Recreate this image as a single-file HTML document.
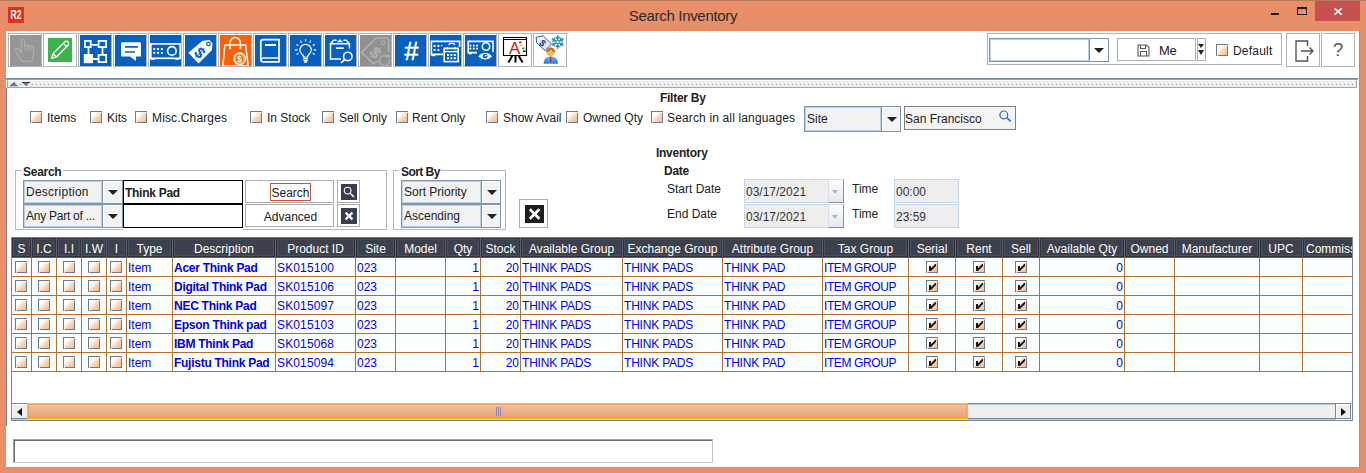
<!DOCTYPE html>
<html><head><meta charset="utf-8"><title>Search Inventory</title>
<style>
*{box-sizing:border-box;margin:0;padding:0}
html,body{width:1366px;height:473px;overflow:hidden;background:#e88e68;font-family:"Liberation Sans",sans-serif;font-size:12px;color:#222}
.a{position:absolute}
#win{position:absolute;left:0;top:0;width:1366px;height:473px;background:#e88e68}
#content{position:absolute;left:6px;top:31px;width:1353px;height:436px;background:#fff}
#redge{position:absolute;left:1359px;top:31px;width:1px;height:436px;background:#d77f55}
.title{position:absolute;left:0;width:1366px;top:7px;text-align:center;font-size:15px;color:#2b2b2b;letter-spacing:-0.32px}
.tb{position:absolute;top:33px;width:34px;height:34px;border:1px solid #b4b4b4;background:#fff;padding:1px}
.tb.blue{background:#fff}
.cb{position:absolute;width:12px;height:12px;border-top:1px solid #6b7c8c;border-left:1px solid #6b7c8c;background:linear-gradient(135deg,#fff 0%,#fff 25%,#fbd0ac 60%,#f9b27a 100%)}
.cb:after{content:"";position:absolute;left:1px;top:1px;right:0;bottom:0;border-right:1px solid #6b7c8c;border-bottom:1px solid #6b7c8c}
.lbl{position:absolute;white-space:nowrap;line-height:14px;height:14px}
.b{font-weight:bold;letter-spacing:-0.27px}
.combo{position:absolute;border:1px solid #7f96ad;background:#f2f2f2}
.combo .t{position:absolute;left:0;top:0;bottom:0;border:1px solid #b8cfe5;background:#f2f2f2;padding-left:1px;white-space:nowrap;overflow:hidden}
.combo .ar{position:absolute;right:0;top:0;bottom:0;width:19px;border-left:1px solid #7f96ad;background:#f3f3f3;box-shadow:inset 1px 1px 0 #fff}
.tri{position:absolute;width:0;height:0;border-left:5px solid transparent;border-right:5px solid transparent;border-top:5px solid #222}
.btn{position:absolute;border:1px solid #adadad;background:#fff;text-align:center}
.th{position:absolute;top:1px;height:19px;background:#3c414d;border:1px solid #2e323c;color:#fff;text-align:center;line-height:18px;padding-top:1px;white-space:nowrap;overflow:hidden;box-shadow:inset 0 0 0 1px #4b505d}
.td{position:absolute;height:19px;background:#fbfeff;border-right:1px solid #b5702f;border-bottom:1px solid #b5702f;color:#0000f0;line-height:20px;white-space:nowrap;overflow:hidden;padding-left:1px}
.td.r{text-align:right;padding-right:1px;padding-left:0}
.ck{position:absolute;width:11px;height:11px;border:1px solid #7a8a99;background:linear-gradient(135deg,#fff 20%,#f9c8a0 100%)}
</style></head><body>
<div id="win">

<div class="a" style="left:0;top:0;width:1366px;height:1px;background:#b9775b"></div>
<div class="a" style="left:8px;top:7px;width:16px;height:16px;background:#e0301e;overflow:hidden"><div style="width:16px;color:#fff;font-size:12px;font-weight:bold;line-height:16px;text-align:center;transform:scaleX(.72)">R2</div></div>
<div class="title">Search Inventory</div>
<div class="a" style="left:1271px;top:13px;width:8px;height:2px;background:#1a1a1a"></div>
<div class="a" style="left:1297px;top:7px;width:10px;height:8px;border:1px solid #1a1a1a;border-top-width:2px"></div>
<div class="a" style="left:1315px;top:1px;width:45px;height:20px;background:#c75050"></div>
<svg class="a" style="left:1333px;top:7px" width="10" height="9" viewBox="0 0 10 9"><path d="M1.500 1.300 L8.700 7.700 M8.700 1.300 L1.500 7.700" stroke="#fff" stroke-width="1.700" fill="none"/></svg>
<div class="a" style="left:6px;top:30px;width:1354px;height:1px;background:#dd8a62"></div>
<div id="content"></div><div id="redge"></div>
<div class="tb" style="left:8px"><svg class="a" style="left:1px;top:1px" width="31" height="31" viewBox="0 0 31 31"><rect width="31" height="31" fill="#969696"/><path d="M11.300 17.600 V5.800 a1.700 1.700 0 0 1 3.400 0 V11.200 q0.200 -1.200 1.500 -1.200 q1.400 0 1.400 1.600 q0.200 -1 1.500 -1 q1.400 0 1.400 1.700 q0.200 -0.800 1.500 -0.800 q1.500 0 1.500 1.800 V21 q0 1.500 -1.800 5.400 H12 L5.700 16.500 q-0.900 -1.800 0.500 -2.700 q1.300 -0.700 2.400 0.600 Z M14.700 11.200 V15.500 M17.600 11.800 V15.500 M20.500 12.400 V15.800" stroke="#adadad" stroke-width="1.300" fill="none" stroke-linejoin="round"/></svg></div>
<div class="tb" style="left:43px"><svg class="a" style="left:4px;top:4px" width="24" height="24" viewBox="0 0 24 24"><rect width="24" height="24" fill="#3cb44b"/><path d="M3.6 20.4 L5 15.6 L16.6 4 a2.2 2.2 0 0 1 3.3 3.3 L8.4 19 Z M5 15.6 L8.4 19 M15.3 5.3 L18.7 8.7" stroke="#fff" stroke-width="1.3" fill="none" stroke-linejoin="round"/><path d="M3.6 20.4 L4.3 18 L6 19.7 Z" fill="#fff"/></svg></div>
<div class="tb" style="left:78px"><svg class="a" style="left:1px;top:1px" width="31" height="31" viewBox="0 0 31 31"><rect width="31" height="31" fill="#0560c0"/><g stroke="#fff" fill="none" stroke-width="1.8"><rect x="4.9" y="5.9" width="5.8" height="6.2"/><rect x="18.6" y="5.9" width="7.5" height="6.2"/><rect x="18.6" y="19.9" width="7.5" height="7.2"/><path d="M11.500 9.800 H17.800 M8.500 13 V19.200 M22.500 13 V19.200 M13 24 H17.800"/></g><rect x="3.800" y="19" width="9.200" height="9.200" fill="#fff"/></svg></div>
<div class="tb" style="left:113px"><svg class="a" style="left:1px;top:1px" width="31" height="31" viewBox="0 0 31 31"><rect width="31" height="31" fill="#0560c0"/><path d="M7.3 7.3 H24.8 a1.2 1.2 0 0 1 1.2 1.2 V20.4 a1.2 1.2 0 0 1 -1.2 1.2 H21 V26 L15 21.6 H7.3 a1.2 1.2 0 0 1 -1.2 -1.2 V8.5 a1.2 1.2 0 0 1 1.2 -1.2 Z" fill="#fff"/><path d="M10 11.9 H23 M10 17 H20" stroke="#0560c0" stroke-width="1.7"/></svg></div>
<div class="tb" style="left:148px"><svg class="a" style="left:1px;top:1px" width="31" height="31" viewBox="0 0 31 31"><rect width="31" height="31" fill="#0560c0"/><rect x="0.8" y="8.9" width="29.4" height="14.4" stroke="#fff" fill="none" stroke-width="1.7"/><rect x="0.8" y="23.5" width="4.2" height="1.3" fill="#fff"/><rect x="25" y="23.5" width="4.2" height="1.3" fill="#fff"/><circle cx="21.9" cy="15.9" r="4.3" stroke="#fff" fill="none" stroke-width="1.6"/><g fill="#fff"><rect x="3.3" y="13.1" width="1.9" height="1.9"/><rect x="7.1" y="13.1" width="1.9" height="1.9"/><rect x="10.9" y="13.1" width="1.9" height="1.9"/><rect x="3.3" y="16.9" width="1.9" height="1.9"/><rect x="7.1" y="16.9" width="1.9" height="1.9"/><rect x="10.9" y="16.9" width="1.9" height="1.9"/></g></svg></div>
<div class="tb" style="left:183px"><svg class="a" style="left:1px;top:1px" width="31" height="31" viewBox="0 0 31 31"><rect width="31" height="31" fill="#0560c0"/><path d="M3.3 17.8 L17.6 5.8 L24.6 5 L27.4 8.6 L27 15 L13.6 28.4 Z" fill="#fff"/><circle cx="23.4" cy="8.9" r="1.7" fill="none" stroke="#0560c0" stroke-width="1.3"/><text transform="translate(14.800 17.700) rotate(45)" x="0" y="5.300" text-anchor="middle" font-family="Liberation Sans, sans-serif" font-weight="bold" font-size="15.500" fill="#0560c0">$</text></svg></div>
<div class="tb" style="left:218px"><svg class="a" style="left:1px;top:1px" width="31" height="31" viewBox="0 0 31 31"><rect width="31" height="31" fill="#ff5f05"/><path d="M4.900 9.900 H25.600 L28.200 31 H2.800 Z" stroke="#fff" fill="none" stroke-width="1.500"/><path d="M10 13 V7.800 a5.200 5.200 0 0 1 10.400 0 V13" stroke="#fff" fill="none" stroke-width="1.500"/><circle cx="10" cy="13.200" r="1.100" fill="#fff"/><circle cx="20.400" cy="13.200" r="1.100" fill="#fff"/><circle cx="19.700" cy="23.700" r="5.700" fill="#ff5f05" stroke="#fff" stroke-width="1.500"/><circle cx="19.700" cy="23.700" r="4.100" fill="none" stroke="#fff" stroke-width="0.500"/><text x="19.700" y="26.800" text-anchor="middle" font-family="Liberation Sans, sans-serif" font-weight="bold" font-size="8.500" fill="#fff">$</text></svg></div>
<div class="tb" style="left:253px"><svg class="a" style="left:1px;top:1px" width="31" height="31" viewBox="0 0 31 31"><rect width="31" height="31" fill="#0560c0"/><path d="M24 4.7 H8 a2.2 2.2 0 0 0 -2.2 2.2 V24.6 a2.2 2.2 0 0 0 2.2 2.2 H24 Z" stroke="#fff" fill="none" stroke-width="1.7"/><path d="M24 23 H8.2 a1.9 1.9 0 0 0 -2 1.9" stroke="#fff" fill="none" stroke-width="1.5"/><rect x="10" y="9" width="11" height="2" fill="#fff"/></svg></div>
<div class="tb" style="left:288px"><svg class="a" style="left:1px;top:1px" width="31" height="31" viewBox="0 0 31 31"><rect width="31" height="31" fill="#0560c0"/><path d="M13.5 22 c0 -2.6 -3.6 -3.6 -3.6 -7 a5.7 5.7 0 0 1 11.4 0 c0 3.4 -3.6 4.4 -3.6 7 Z" stroke="#fff" fill="none" stroke-width="1.2"/><path d="M13.300 23.500 H17.900 M13.300 25.300 H17.900 M14 27 H17.200" stroke="#fff" stroke-width="1.300"/><g stroke="#fff" stroke-width="1.1"><path d="M15.6 4.2 V6.4 M10.4 5.6 L11.5 7.7 M20.8 5.6 L19.7 7.7 M6.4 9.4 L8.5 10.6 M24.8 9.4 L22.7 10.6 M5 14.9 H7.6 M23.6 14.9 H26.2 M6.4 19.5 L8.5 18.3 M24.8 19.5 L22.7 18.3"/></g></svg></div>
<div class="tb" style="left:323px"><svg class="a" style="left:1px;top:1px" width="31" height="31" viewBox="0 0 31 31"><rect width="31" height="31" fill="#0560c0"/><path d="M24.400 13.600 V8.800 H5.500 V24 H16" stroke="#fff" fill="none" stroke-width="1.500"/><path d="M5.500 8.800 L8.700 5.300 H11.600 M18.400 5.300 H21.300 L24.400 8.800" stroke="#fff" fill="none" stroke-width="1.400"/><path d="M11.600 7.300 L14.900 3.900 L18.200 7.300 Z" fill="#dfeaf8"/><rect x="10.900" y="12.300" width="7.900" height="1.700" fill="#fff"/><circle cx="22.800" cy="21.400" r="4.200" stroke="#fff" fill="none" stroke-width="1.600"/><path d="M19.600 24.600 L16 27.900" stroke="#fff" stroke-width="1.900"/></svg></div>
<div class="tb" style="left:358px"><svg class="a" style="left:1px;top:1px" width="31" height="31" viewBox="0 0 31 31"><rect width="31" height="31" fill="#909090"/><path d="M17.800 25.800 L13.400 28.900 L1.600 17.400 L16.200 3 H27.300 a1.400 1.400 0 0 1 1.400 1.400 V17" stroke="#b0b0b0" fill="none" stroke-width="1.700" stroke-linejoin="round"/><circle cx="23" cy="7.700" r="1.900" stroke="#b0b0b0" fill="none" stroke-width="1.100"/><text transform="translate(15.500 17.400) rotate(45)" x="0" y="5.200" text-anchor="middle" font-family="Liberation Sans, sans-serif" font-size="15" fill="#b0b0b0" stroke="#b0b0b0" stroke-width=".7">$</text><path d="M27.600 21.800 a5 5 0 1 0 1.800 3.200" stroke="#b0b0b0" fill="none" stroke-width="1.500"/><path d="M26.800 18.600 L30.800 21.400 L27 23.300 Z" fill="#b0b0b0"/></svg></div>
<div class="tb" style="left:393px"><svg class="a" style="left:1px;top:1px" width="31" height="31" viewBox="0 0 31 31"><rect width="31" height="31" fill="#0560c0"/><text x="16" y="24.600" text-anchor="middle" font-family="Liberation Sans, sans-serif" font-style="italic" font-size="25.500" fill="#fff" stroke="#fff" stroke-width="0.500">#</text></svg></div>
<div class="tb" style="left:428px"><svg class="a" style="left:1px;top:1px" width="31" height="31" viewBox="0 0 31 31"><rect width="31" height="31" fill="#0560c0"/><path d="M13 19.4 H1.4 V6.4 H29.6 V12" stroke="#fff" fill="none" stroke-width="1.6"/><rect x="1.4" y="20" width="4" height="1.2" fill="#fff"/><g fill="#fff"><rect x="3.6" y="10" width="1.9" height="1.9"/><rect x="7.4" y="10" width="1.9" height="1.9"/><rect x="3.6" y="14" width="1.9" height="1.9"/><rect x="7.4" y="14" width="1.9" height="1.9"/><rect x="11" y="10" width="1.4" height="1"/></g><path d="M18.5 10 a4 4 0 0 1 6.6 0" stroke="#fff" fill="none" stroke-width="1.3"/><rect x="14.2" y="13.4" width="14" height="13.2" fill="#0560c0" stroke="#fff" stroke-width="1.6"/><path d="M14.2 16.6 H28.2" stroke="#fff" stroke-width="1.4"/><circle cx="17.2" cy="13.2" r="1.3" fill="#fff"/><circle cx="25.2" cy="13.2" r="1.3" fill="#fff"/><g fill="#fff"><rect x="17" y="19" width="2" height="2"/><rect x="20.4" y="19" width="2" height="2"/><rect x="23.8" y="19" width="2" height="2"/><rect x="17" y="22.2" width="2" height="2"/><rect x="20.4" y="22.2" width="2" height="2"/><rect x="23.8" y="22.2" width="2" height="2"/></g></svg></div>
<div class="tb" style="left:463px"><svg class="a" style="left:1px;top:1px" width="31" height="31" viewBox="0 0 31 31"><rect width="31" height="31" fill="#0560c0"/><path d="M12 17.6 H3.2 V6.4 H28 V17" stroke="#fff" fill="none" stroke-width="1.6"/><rect x="3.4" y="18.2" width="3.6" height="1.1" fill="#fff"/><g fill="#fff"><rect x="4.5" y="9.7" width="1.8" height="1.8"/><rect x="7.9" y="9.7" width="1.8" height="1.8"/><rect x="11.2" y="9.7" width="1.8" height="1.8"/><rect x="4.5" y="12.7" width="1.8" height="1.8"/><rect x="7.9" y="12.7" width="1.8" height="1.8"/><rect x="11.2" y="12.7" width="1.8" height="1.8"/></g><circle cx="21" cy="11.5" r="3.7" stroke="#fff" fill="none" stroke-width="1.5"/><path d="M12.6 21.2 Q20.2 13.4 27.8 21.2 Q20.2 29 12.6 21.2 Z" fill="#fff" stroke="#0560c0" stroke-width="1"/><circle cx="20.2" cy="21.2" r="2.4" fill="#0560c0"/><circle cx="20.8" cy="20.6" r="0.9" fill="#fff"/></svg></div>
<div class="tb" style="left:498px"><svg class="a" style="left:1px;top:1px" width="31" height="31" viewBox="0 0 31 31"><rect x="3.500" y="2.500" width="23" height="18" fill="#fff" stroke="#000" stroke-width="1.100"/><path d="M3.500 4.500 H26.500" stroke="#000" stroke-width="1"/><path d="M12.2 21 L8.4 27.6 M15.5 21 V27.6 M18.8 21 L22.6 27.6" stroke="#000" stroke-width="2"/><text x="14.6" y="19" text-anchor="middle" font-family="Liberation Sans, sans-serif" font-size="17" fill="#d01818">A</text><rect x="19" y="6.6" width="2.6" height="1.6" fill="#e01010"/><rect x="20" y="9.6" width="2.6" height="1.6" fill="#f0d000"/><rect x="22" y="12.5" width="2.6" height="1.6" fill="#10c010"/><rect x="23" y="15.4" width="2.6" height="1.6" fill="#1010f0"/></svg></div>
<div class="tb" style="left:533px"><svg class="a" style="left:1px;top:1px" width="31" height="31" viewBox="0 0 31 31"><defs><linearGradient id="tg" x1="0" y1="0" x2="1" y2="1"><stop offset="0" stop-color="#fff"/><stop offset="1" stop-color="#cfe2fa"/></linearGradient><radialGradient id="bd" cx=".5" cy=".2" r=".9"><stop offset="0" stop-color="#6ab4f4"/><stop offset="1" stop-color="#1c78d8"/></radialGradient></defs><path d="M1.2 2.2 L8.3 0.9 L16.4 9 L10 15.7 L1.6 7.7 Z" fill="url(#tg)" stroke="#2262b4" stroke-width="1"/><text transform="translate(7.600 8) rotate(45)" x="0" y="3.300" text-anchor="middle" font-family="Liberation Sans, sans-serif" font-weight="bold" font-size="9.500" fill="#3a2a80">$</text><g stroke="#2590b4" stroke-width="1.400" fill="none"><g transform="rotate(0 22.700 7)"><path d="M22.700 7 V0.200 M20.700 1.900 L22.700 3.700 L24.700 1.900"/></g><g transform="rotate(60 22.700 7)"><path d="M22.700 7 V0.200 M20.700 1.900 L22.700 3.700 L24.700 1.900"/></g><g transform="rotate(120 22.700 7)"><path d="M22.700 7 V0.200 M20.700 1.900 L22.700 3.700 L24.700 1.900"/></g><g transform="rotate(180 22.700 7)"><path d="M22.700 7 V0.200 M20.700 1.900 L22.700 3.700 L24.700 1.900"/></g><g transform="rotate(240 22.700 7)"><path d="M22.700 7 V0.200 M20.700 1.900 L22.700 3.700 L24.700 1.900"/></g><g transform="rotate(300 22.700 7)"><path d="M22.700 7 V0.200 M20.700 1.900 L22.700 3.700 L24.700 1.900"/></g></g><circle cx="22.700" cy="7" r="1.700" fill="#fff" stroke="#2590b4" stroke-width="1"/><path d="M8.6 28.8 c0 -5 3.200 -7.400 7.200 -7.400 c4 0 7.200 2.400 7.200 7.400 Z" fill="url(#bd)"/><path d="M15.200 21.600 L16.200 21.600 L16.900 26.500 L15.700 27.800 L14.500 26.500 Z" fill="#d03030"/><circle cx="15.600" cy="16.800" r="4.400" fill="#f8b866"/><path d="M10.900 17.400 a4.700 4.900 0 0 1 9.400 0 c-1.600 -0.500 -3.200 -1.500 -4.300 -3 c-1.300 1.700 -3.200 2.600 -5.100 3 Z" fill="#b87818"/></svg></div>
<div class="a" style="left:987px;top:33px;width:295px;height:32px;border:1px solid #b4b4b4"></div>
<div class="combo" style="left:989px;top:38px;width:120px;height:24px"><div class="t" style="right:19px;background:#fff"></div><div class="ar" style="background:#fff"><div class="tri" style="left:4px;top:9px"></div></div></div>
<div class="btn" style="left:1117px;top:38px;width:79px;height:23px"></div>
<svg class="a" style="left:1137px;top:44px" width="13" height="13" viewBox="0 0 13 13"><path d="M1 1 H9.500 L12 3.500 V12 H1 Z" fill="none" stroke="#5a5a5a" stroke-width="1.1"/><path d="M3.500 1 V4.500 H8.500 V1 M3.500 12 V7.500 H9.500 V12" fill="none" stroke="#5a5a5a" stroke-width="1.1"/></svg>
<div class="lbl" style="left:1159px;top:43px;font-size:13px;letter-spacing:-.4px;line-height:16px;height:16px">Me</div>
<div class="btn" style="left:1197px;top:38px;width:9px;height:23px"></div>
<div class="tri" style="left:1198px;top:44px;border-left-width:3.5px;border-right-width:3.5px;border-top-width:4px"></div><div class="tri" style="left:1198px;top:50px;border-left-width:3.5px;border-right-width:3.5px;border-top-width:5px"></div>
<div class="cb" style="left:1216px;top:44px"></div><div class="lbl" style="left:1233px;top:44px;letter-spacing:.2px">Default</div>
<div class="tb" style="left:1286px"><svg class="a" style="left:8px;top:6px" width="20" height="22" viewBox="0 0 20 22"><path d="M12.500 6 V1 H1 V21 H12.500 V16" fill="none" stroke="#555" stroke-width="1.400"/><path d="M6 11 H18 M14.500 7.500 L18 11 L14.500 14.500" fill="none" stroke="#555" stroke-width="1.400"/></svg></div>
<div class="tb" style="left:1321px"><div style="position:absolute;left:0;top:5px;width:32px;text-align:center;font-size:19px;line-height:22px;color:#5a5a5a">?</div></div>
<div class="a" style="left:6px;top:78px;width:1352px;height:2px;background:linear-gradient(#6f8aa6 50%,#9aa3ad 50%)"></div>
<div class="a" style="left:7px;top:80px;width:1350px;height:8px;background:#eee;border:1px solid #a6a6a6;border-top-color:#fff;background-image:radial-gradient(circle at 0.5px 0.5px,#7f8c9a 0.6px,transparent 0.9px);background-size:4px 8px;background-position:24px 3px;background-repeat:repeat-x"></div>
<div class="a" style="left:8px;top:81px;width:24px;height:6px;background:#eee"></div>
<svg class="a" style="left:10px;top:82px" width="22" height="5" viewBox="0 0 22 5"><path d="M0.300 4.300 L4.300 0.300 L8.300 4.300 Z" fill="#5a7fc8"/><path d="M0.300 4.300 L4.300 0.300" stroke="#222" stroke-width="0.900"/><path d="M12 0.300 L20 0.300 L16 4.300 Z" fill="#5a7fc8"/><path d="M12 0.400 H20" stroke="#222" stroke-width="0.900"/><rect x="10" y="2" width="1" height="1" fill="#7f8c9a"/></svg>
<div class="a" style="left:6px;top:88px;width:1px;height:338px;background:#7a8a99"></div>
<div class="cb" style="left:30px;top:111px"></div><div class="lbl" style="left:47px;top:111px">Items</div>
<div class="cb" style="left:90px;top:111px"></div><div class="lbl" style="left:107px;top:111px">Kits</div>
<div class="cb" style="left:135px;top:111px"></div><div class="lbl" style="left:152px;top:111px"><span style="letter-spacing:.15px">Misc.Charges</span></div>
<div class="cb" style="left:250px;top:111px"></div><div class="lbl" style="left:267px;top:111px">In Stock</div>
<div class="cb" style="left:322px;top:111px"></div><div class="lbl" style="left:339px;top:111px">Sell Only</div>
<div class="cb" style="left:396px;top:111px"></div><div class="lbl" style="left:412px;top:111px">Rent Only</div>
<div class="cb" style="left:486px;top:111px"></div><div class="lbl" style="left:503px;top:111px">Show Avail</div>
<div class="cb" style="left:566px;top:111px"></div><div class="lbl" style="left:583px;top:111px">Owned Qty</div>
<div class="cb" style="left:651px;top:111px"></div><div class="lbl" style="left:667px;top:111px"><span style="letter-spacing:.15px">Search in all languages</span></div>
<div class="lbl b" style="left:660px;top:91px">Filter By</div>
<div class="combo" style="left:804px;top:106px;width:97px;height:26px"><div class="t" style="right:19px;line-height:22px">Site</div><div class="ar" style="width:19px"><div class="tri" style="left:5px;top:10px"></div></div></div>
<div class="a" style="left:904px;top:106px;width:112px;height:24px;border:1px solid #808080;background:#f4f4f4"></div>
<div class="lbl" style="left:905px;top:112px">San Francisco</div>
<svg class="a" style="left:998px;top:109px" width="15" height="15" viewBox="0 0 15 15"><circle cx="5.800" cy="5.900" r="3.900" fill="none" stroke="#2470c8" stroke-width="1.200"/><path d="M8.600 8.700 L12.800 12.400" stroke="#2470c8" stroke-width="1.600"/></svg>
<div class="a" style="left:15px;top:170px;width:372px;height:60px;border:1px solid #b8b8b8"></div>
<div class="lbl b" style="left:21px;top:165px;background:#fff;padding:0 2px;width:42px">Search</div>
<div class="combo" style="left:23px;top:180px;width:100px;height:24px"><div class="t" style="right:20px;line-height:20px"><span style="letter-spacing:.25px">Description</span></div><div class="ar" style="width:20px"><div class="tri" style="left:5px;top:9px"></div></div></div>
<div class="combo" style="left:23px;top:204px;width:100px;height:24px"><div class="t" style="right:20px;line-height:20px"><span style="letter-spacing:-.25px">Any Part of ...</span></div><div class="ar" style="width:20px"><div class="tri" style="left:5px;top:9px"></div></div></div>
<div class="a" style="left:123px;top:180px;width:120px;height:24px;border:1px solid #000;background:#fff"></div>
<div class="a" style="left:123px;top:204px;width:120px;height:24px;border:1px solid #000;background:#fff"></div>
<div class="a" style="left:123px;top:229px;width:120px;height:1px;background:#fff"></div>
<div class="lbl b" style="left:125px;top:186px">Think Pad</div>
<div class="btn" style="left:245px;top:180px;width:89px;height:23px"></div>
<div class="a" style="left:270px;top:183px;width:41px;height:18px;border:1px solid #c8553a"></div>
<div class="lbl" style="left:246px;top:186px;width:89px;text-align:center">Search</div>
<div class="btn" style="left:245px;top:204px;width:89px;height:23px"></div>
<div class="lbl" style="left:246px;top:210px;width:89px;text-align:center">Advanced</div>
<div class="btn" style="left:337px;top:180px;width:23px;height:23px"></div>
<svg class="a" style="left:341px;top:184px" width="16" height="16" viewBox="0 0 16 16"><rect width="16" height="16" fill="#3a3f4c"/><circle cx="6.600" cy="6.600" r="3.400" fill="none" stroke="#fff" stroke-width="1.100"/><path d="M9.200 9.200 L13 13" stroke="#fff" stroke-width="1.500"/></svg>
<div class="btn" style="left:337px;top:204px;width:23px;height:23px"></div>
<svg class="a" style="left:341px;top:208px" width="16" height="16" viewBox="0 0 16 16"><rect width="16" height="16" fill="#3a3f4c"/><path d="M4.600 4.600 L11.400 11.400 M11.400 4.600 L4.600 11.400" stroke="#fff" stroke-width="2.300"/></svg>
<div class="a" style="left:393px;top:170px;width:113px;height:60px;border:1px solid #b8b8b8"></div>
<div class="lbl b" style="left:399px;top:165px;background:#fff;padding:0 2px;width:42px"><span style="letter-spacing:-.55px">Sort By</span></div>
<div class="combo" style="left:401px;top:180px;width:100px;height:24px"><div class="t" style="right:19px;line-height:20px">Sort Priority</div><div class="ar" style="width:19px"><div class="tri" style="left:5px;top:9px"></div></div></div>
<div class="combo" style="left:401px;top:204px;width:100px;height:24px"><div class="t" style="right:19px;line-height:20px">Ascending</div><div class="ar" style="width:19px"><div class="tri" style="left:5px;top:9px"></div></div></div>
<div class="btn" style="left:519px;top:199px;width:29px;height:29px"></div>
<svg class="a" style="left:525px;top:205px" width="19" height="18" viewBox="0 0 19 18"><rect width="19" height="18" fill="#1e1e1e"/><path d="M4.800 4.200 L14.400 13.800 M14.400 4.200 L4.800 13.800" stroke="#fff" stroke-width="2.700"/></svg>
<div class="lbl b" style="left:656px;top:146px">Inventory</div>
<div class="lbl b" style="left:664px;top:164px">Date</div>
<div class="lbl" style="left:667px;top:182px">Start Date</div>
<div class="lbl" style="left:667px;top:207px">End Date</div>
<div class="a" style="left:744px;top:179px;width:100px;height:24px;border:1px solid #c3d6ea;background:#eee"></div>
<div class="a" style="left:828px;top:179px;width:16px;height:24px;border:1px solid #d5dde6;border-right-color:#8e8e8e;border-bottom-color:#8e8e8e;background:linear-gradient(#fdfdfe,#e3e9f0)"></div>
<div class="tri" style="left:832px;top:190px;border-left-width:3.500px;border-right-width:3.500px;border-top:4px solid #a4b8cc"></div>
<div class="lbl" style="left:746px;top:185px;color:#333">03/17/2021</div>
<div class="lbl" style="left:852px;top:182px">Time</div>
<div class="a" style="left:894px;top:179px;width:65px;height:24px;border:1px solid #c3d6ea;background:#eee"></div>
<div class="lbl" style="left:896px;top:185px;color:#333">00:00</div>
<div class="a" style="left:744px;top:204px;width:100px;height:24px;border:1px solid #c3d6ea;background:#eee"></div>
<div class="a" style="left:828px;top:204px;width:16px;height:24px;border:1px solid #d5dde6;border-right-color:#8e8e8e;border-bottom-color:#8e8e8e;background:linear-gradient(#fdfdfe,#e3e9f0)"></div>
<div class="tri" style="left:832px;top:215px;border-left-width:3.500px;border-right-width:3.500px;border-top:4px solid #a4b8cc"></div>
<div class="lbl" style="left:746px;top:210px;color:#333">03/17/2021</div>
<div class="lbl" style="left:852px;top:207px">Time</div>
<div class="a" style="left:894px;top:204px;width:65px;height:24px;border:1px solid #c3d6ea;background:#eee"></div>
<div class="lbl" style="left:896px;top:210px;color:#333">23:59</div>
<div class="a" style="left:11px;top:237px;width:1342px;height:184px;border:1px solid #7a8a99;border-top:0;overflow:hidden">
<div class="a" style="left:0;top:0;width:1342px;height:1px;background:#6c7f94"></div>
<div class="a" style="left:0;top:1px;width:1342px;height:20px;background:#5a6376"></div>
<div class="th" style="left:0px;width:19px">S</div>
<div class="th" style="left:20px;width:24px">I.C</div>
<div class="th" style="left:45px;width:24px">I.I</div>
<div class="th" style="left:70px;width:24px">I.W</div>
<div class="th" style="left:95px;width:19px">I</div>
<div class="th" style="left:115px;width:45px">Type</div>
<div class="th" style="left:161px;width:102px">Description</div>
<div class="th" style="left:264px;width:79px">Product ID</div>
<div class="th" style="left:344px;width:39px">Site</div>
<div class="th" style="left:384px;width:49px">Model</div>
<div class="th" style="left:434px;width:34px">Qty</div>
<div class="th" style="left:469px;width:39px">Stock</div>
<div class="th" style="left:509px;width:101px">Available Group</div>
<div class="th" style="left:611px;width:99px">Exchange Group</div>
<div class="th" style="left:711px;width:99px">Attribute Group</div>
<div class="th" style="left:811px;width:85px">Tax Group</div>
<div class="th" style="left:897px;width:46px">Serial</div>
<div class="th" style="left:944px;width:46px">Rent</div>
<div class="th" style="left:991px;width:36px">Sell</div>
<div class="th" style="left:1028px;width:84px">Available Qty</div>
<div class="th" style="left:1113px;width:49px">Owned</div>
<div class="th" style="left:1163px;width:84px">Manufacturer</div>
<div class="th" style="left:1248px;width:42px">UPC</div>
<div class="th" style="left:1291px;width:72px">Commission</div>
<div class="td" style="left:0px;top:21px;width:20px;padding:0"><div class="cb" style="left:3px;top:3px"></div></div>
<div class="td" style="left:20px;top:21px;width:25px;padding:0"><div class="cb" style="left:6px;top:3px"></div></div>
<div class="td" style="left:45px;top:21px;width:25px;padding:0"><div class="cb" style="left:6px;top:3px"></div></div>
<div class="td" style="left:70px;top:21px;width:25px;padding:0"><div class="cb" style="left:6px;top:3px"></div></div>
<div class="td" style="left:95px;top:21px;width:20px;padding:0"><div class="cb" style="left:3px;top:3px"></div></div>
<div class="td" style="left:115px;top:21px;width:46px">Item</div>
<div class="td b" style="left:161px;top:21px;width:103px">Acer Think Pad</div>
<div class="td" style="left:264px;top:21px;width:80px;letter-spacing:.14px">SK015100</div>
<div class="td" style="left:344px;top:21px;width:40px">023</div>
<div class="td" style="left:384px;top:21px;width:50px"></div>
<div class="td r" style="left:434px;top:21px;width:35px">1</div>
<div class="td r" style="left:469px;top:21px;width:40px">20</div>
<div class="td" style="left:509px;top:21px;width:102px;letter-spacing:-.2px">THINK PADS</div>
<div class="td" style="left:611px;top:21px;width:100px;letter-spacing:-.2px">THINK PADS</div>
<div class="td" style="left:711px;top:21px;width:100px;letter-spacing:-.2px">THINK PAD</div>
<div class="td" style="left:811px;top:21px;width:86px;letter-spacing:-.4px">ITEM GROUP</div>
<div class="td" style="left:897px;top:21px;width:47px;padding:0"><div class="cb" style="left:17px;top:3px"><svg width="12" height="12" viewBox="0 0 12 12" style="position:absolute;left:-1px;top:-1px"><path d="M3 5 H5 V7.200 L9.200 3 H10 V5 L5 10 H3 Z" fill="#151515"/></svg></div></div>
<div class="td" style="left:944px;top:21px;width:47px;padding:0"><div class="cb" style="left:17px;top:3px"><svg width="12" height="12" viewBox="0 0 12 12" style="position:absolute;left:-1px;top:-1px"><path d="M3 5 H5 V7.200 L9.200 3 H10 V5 L5 10 H3 Z" fill="#151515"/></svg></div></div>
<div class="td" style="left:991px;top:21px;width:37px;padding:0"><div class="cb" style="left:12px;top:3px"><svg width="12" height="12" viewBox="0 0 12 12" style="position:absolute;left:-1px;top:-1px"><path d="M3 5 H5 V7.200 L9.200 3 H10 V5 L5 10 H3 Z" fill="#151515"/></svg></div></div>
<div class="td r" style="left:1028px;top:21px;width:85px">0</div>
<div class="td" style="left:1113px;top:21px;width:50px"></div>
<div class="td" style="left:1163px;top:21px;width:85px"></div>
<div class="td" style="left:1248px;top:21px;width:43px"></div>
<div class="td" style="left:1291px;top:21px;width:73px"></div>
<div class="td" style="left:0px;top:40px;width:20px;padding:0"><div class="cb" style="left:3px;top:3px"></div></div>
<div class="td" style="left:20px;top:40px;width:25px;padding:0"><div class="cb" style="left:6px;top:3px"></div></div>
<div class="td" style="left:45px;top:40px;width:25px;padding:0"><div class="cb" style="left:6px;top:3px"></div></div>
<div class="td" style="left:70px;top:40px;width:25px;padding:0"><div class="cb" style="left:6px;top:3px"></div></div>
<div class="td" style="left:95px;top:40px;width:20px;padding:0"><div class="cb" style="left:3px;top:3px"></div></div>
<div class="td" style="left:115px;top:40px;width:46px">Item</div>
<div class="td b" style="left:161px;top:40px;width:103px">Digital Think Pad</div>
<div class="td" style="left:264px;top:40px;width:80px;letter-spacing:.14px">SK015106</div>
<div class="td" style="left:344px;top:40px;width:40px">023</div>
<div class="td" style="left:384px;top:40px;width:50px"></div>
<div class="td r" style="left:434px;top:40px;width:35px">1</div>
<div class="td r" style="left:469px;top:40px;width:40px">20</div>
<div class="td" style="left:509px;top:40px;width:102px;letter-spacing:-.2px">THINK PADS</div>
<div class="td" style="left:611px;top:40px;width:100px;letter-spacing:-.2px">THINK PADS</div>
<div class="td" style="left:711px;top:40px;width:100px;letter-spacing:-.2px">THINK PAD</div>
<div class="td" style="left:811px;top:40px;width:86px;letter-spacing:-.4px">ITEM GROUP</div>
<div class="td" style="left:897px;top:40px;width:47px;padding:0"><div class="cb" style="left:17px;top:3px"><svg width="12" height="12" viewBox="0 0 12 12" style="position:absolute;left:-1px;top:-1px"><path d="M3 5 H5 V7.200 L9.200 3 H10 V5 L5 10 H3 Z" fill="#151515"/></svg></div></div>
<div class="td" style="left:944px;top:40px;width:47px;padding:0"><div class="cb" style="left:17px;top:3px"><svg width="12" height="12" viewBox="0 0 12 12" style="position:absolute;left:-1px;top:-1px"><path d="M3 5 H5 V7.200 L9.200 3 H10 V5 L5 10 H3 Z" fill="#151515"/></svg></div></div>
<div class="td" style="left:991px;top:40px;width:37px;padding:0"><div class="cb" style="left:12px;top:3px"><svg width="12" height="12" viewBox="0 0 12 12" style="position:absolute;left:-1px;top:-1px"><path d="M3 5 H5 V7.200 L9.200 3 H10 V5 L5 10 H3 Z" fill="#151515"/></svg></div></div>
<div class="td r" style="left:1028px;top:40px;width:85px">0</div>
<div class="td" style="left:1113px;top:40px;width:50px"></div>
<div class="td" style="left:1163px;top:40px;width:85px"></div>
<div class="td" style="left:1248px;top:40px;width:43px"></div>
<div class="td" style="left:1291px;top:40px;width:73px"></div>
<div class="td" style="left:0px;top:59px;width:20px;padding:0"><div class="cb" style="left:3px;top:3px"></div></div>
<div class="td" style="left:20px;top:59px;width:25px;padding:0"><div class="cb" style="left:6px;top:3px"></div></div>
<div class="td" style="left:45px;top:59px;width:25px;padding:0"><div class="cb" style="left:6px;top:3px"></div></div>
<div class="td" style="left:70px;top:59px;width:25px;padding:0"><div class="cb" style="left:6px;top:3px"></div></div>
<div class="td" style="left:95px;top:59px;width:20px;padding:0"><div class="cb" style="left:3px;top:3px"></div></div>
<div class="td" style="left:115px;top:59px;width:46px">Item</div>
<div class="td b" style="left:161px;top:59px;width:103px">NEC Think Pad</div>
<div class="td" style="left:264px;top:59px;width:80px;letter-spacing:.14px">SK015097</div>
<div class="td" style="left:344px;top:59px;width:40px">023</div>
<div class="td" style="left:384px;top:59px;width:50px"></div>
<div class="td r" style="left:434px;top:59px;width:35px">1</div>
<div class="td r" style="left:469px;top:59px;width:40px">20</div>
<div class="td" style="left:509px;top:59px;width:102px;letter-spacing:-.2px">THINK PADS</div>
<div class="td" style="left:611px;top:59px;width:100px;letter-spacing:-.2px">THINK PADS</div>
<div class="td" style="left:711px;top:59px;width:100px;letter-spacing:-.2px">THINK PAD</div>
<div class="td" style="left:811px;top:59px;width:86px;letter-spacing:-.4px">ITEM GROUP</div>
<div class="td" style="left:897px;top:59px;width:47px;padding:0"><div class="cb" style="left:17px;top:3px"><svg width="12" height="12" viewBox="0 0 12 12" style="position:absolute;left:-1px;top:-1px"><path d="M3 5 H5 V7.200 L9.200 3 H10 V5 L5 10 H3 Z" fill="#151515"/></svg></div></div>
<div class="td" style="left:944px;top:59px;width:47px;padding:0"><div class="cb" style="left:17px;top:3px"><svg width="12" height="12" viewBox="0 0 12 12" style="position:absolute;left:-1px;top:-1px"><path d="M3 5 H5 V7.200 L9.200 3 H10 V5 L5 10 H3 Z" fill="#151515"/></svg></div></div>
<div class="td" style="left:991px;top:59px;width:37px;padding:0"><div class="cb" style="left:12px;top:3px"><svg width="12" height="12" viewBox="0 0 12 12" style="position:absolute;left:-1px;top:-1px"><path d="M3 5 H5 V7.200 L9.200 3 H10 V5 L5 10 H3 Z" fill="#151515"/></svg></div></div>
<div class="td r" style="left:1028px;top:59px;width:85px">0</div>
<div class="td" style="left:1113px;top:59px;width:50px"></div>
<div class="td" style="left:1163px;top:59px;width:85px"></div>
<div class="td" style="left:1248px;top:59px;width:43px"></div>
<div class="td" style="left:1291px;top:59px;width:73px"></div>
<div class="td" style="left:0px;top:78px;width:20px;padding:0"><div class="cb" style="left:3px;top:3px"></div></div>
<div class="td" style="left:20px;top:78px;width:25px;padding:0"><div class="cb" style="left:6px;top:3px"></div></div>
<div class="td" style="left:45px;top:78px;width:25px;padding:0"><div class="cb" style="left:6px;top:3px"></div></div>
<div class="td" style="left:70px;top:78px;width:25px;padding:0"><div class="cb" style="left:6px;top:3px"></div></div>
<div class="td" style="left:95px;top:78px;width:20px;padding:0"><div class="cb" style="left:3px;top:3px"></div></div>
<div class="td" style="left:115px;top:78px;width:46px">Item</div>
<div class="td b" style="left:161px;top:78px;width:103px">Epson Think pad</div>
<div class="td" style="left:264px;top:78px;width:80px;letter-spacing:.14px">SK015103</div>
<div class="td" style="left:344px;top:78px;width:40px">023</div>
<div class="td" style="left:384px;top:78px;width:50px"></div>
<div class="td r" style="left:434px;top:78px;width:35px">1</div>
<div class="td r" style="left:469px;top:78px;width:40px">20</div>
<div class="td" style="left:509px;top:78px;width:102px;letter-spacing:-.2px">THINK PADS</div>
<div class="td" style="left:611px;top:78px;width:100px;letter-spacing:-.2px">THINK PADS</div>
<div class="td" style="left:711px;top:78px;width:100px;letter-spacing:-.2px">THINK PAD</div>
<div class="td" style="left:811px;top:78px;width:86px;letter-spacing:-.4px">ITEM GROUP</div>
<div class="td" style="left:897px;top:78px;width:47px;padding:0"><div class="cb" style="left:17px;top:3px"><svg width="12" height="12" viewBox="0 0 12 12" style="position:absolute;left:-1px;top:-1px"><path d="M3 5 H5 V7.200 L9.200 3 H10 V5 L5 10 H3 Z" fill="#151515"/></svg></div></div>
<div class="td" style="left:944px;top:78px;width:47px;padding:0"><div class="cb" style="left:17px;top:3px"><svg width="12" height="12" viewBox="0 0 12 12" style="position:absolute;left:-1px;top:-1px"><path d="M3 5 H5 V7.200 L9.200 3 H10 V5 L5 10 H3 Z" fill="#151515"/></svg></div></div>
<div class="td" style="left:991px;top:78px;width:37px;padding:0"><div class="cb" style="left:12px;top:3px"><svg width="12" height="12" viewBox="0 0 12 12" style="position:absolute;left:-1px;top:-1px"><path d="M3 5 H5 V7.200 L9.200 3 H10 V5 L5 10 H3 Z" fill="#151515"/></svg></div></div>
<div class="td r" style="left:1028px;top:78px;width:85px">0</div>
<div class="td" style="left:1113px;top:78px;width:50px"></div>
<div class="td" style="left:1163px;top:78px;width:85px"></div>
<div class="td" style="left:1248px;top:78px;width:43px"></div>
<div class="td" style="left:1291px;top:78px;width:73px"></div>
<div class="td" style="left:0px;top:97px;width:20px;padding:0"><div class="cb" style="left:3px;top:3px"></div></div>
<div class="td" style="left:20px;top:97px;width:25px;padding:0"><div class="cb" style="left:6px;top:3px"></div></div>
<div class="td" style="left:45px;top:97px;width:25px;padding:0"><div class="cb" style="left:6px;top:3px"></div></div>
<div class="td" style="left:70px;top:97px;width:25px;padding:0"><div class="cb" style="left:6px;top:3px"></div></div>
<div class="td" style="left:95px;top:97px;width:20px;padding:0"><div class="cb" style="left:3px;top:3px"></div></div>
<div class="td" style="left:115px;top:97px;width:46px">Item</div>
<div class="td b" style="left:161px;top:97px;width:103px">IBM Think Pad</div>
<div class="td" style="left:264px;top:97px;width:80px;letter-spacing:.14px">SK015068</div>
<div class="td" style="left:344px;top:97px;width:40px">023</div>
<div class="td" style="left:384px;top:97px;width:50px"></div>
<div class="td r" style="left:434px;top:97px;width:35px">1</div>
<div class="td r" style="left:469px;top:97px;width:40px">20</div>
<div class="td" style="left:509px;top:97px;width:102px;letter-spacing:-.2px">THINK PADS</div>
<div class="td" style="left:611px;top:97px;width:100px;letter-spacing:-.2px">THINK PADS</div>
<div class="td" style="left:711px;top:97px;width:100px;letter-spacing:-.2px">THINK PAD</div>
<div class="td" style="left:811px;top:97px;width:86px;letter-spacing:-.4px">ITEM GROUP</div>
<div class="td" style="left:897px;top:97px;width:47px;padding:0"><div class="cb" style="left:17px;top:3px"><svg width="12" height="12" viewBox="0 0 12 12" style="position:absolute;left:-1px;top:-1px"><path d="M3 5 H5 V7.200 L9.200 3 H10 V5 L5 10 H3 Z" fill="#151515"/></svg></div></div>
<div class="td" style="left:944px;top:97px;width:47px;padding:0"><div class="cb" style="left:17px;top:3px"><svg width="12" height="12" viewBox="0 0 12 12" style="position:absolute;left:-1px;top:-1px"><path d="M3 5 H5 V7.200 L9.200 3 H10 V5 L5 10 H3 Z" fill="#151515"/></svg></div></div>
<div class="td" style="left:991px;top:97px;width:37px;padding:0"><div class="cb" style="left:12px;top:3px"><svg width="12" height="12" viewBox="0 0 12 12" style="position:absolute;left:-1px;top:-1px"><path d="M3 5 H5 V7.200 L9.200 3 H10 V5 L5 10 H3 Z" fill="#151515"/></svg></div></div>
<div class="td r" style="left:1028px;top:97px;width:85px">0</div>
<div class="td" style="left:1113px;top:97px;width:50px"></div>
<div class="td" style="left:1163px;top:97px;width:85px"></div>
<div class="td" style="left:1248px;top:97px;width:43px"></div>
<div class="td" style="left:1291px;top:97px;width:73px"></div>
<div class="td" style="left:0px;top:116px;width:20px;padding:0"><div class="cb" style="left:3px;top:3px"></div></div>
<div class="td" style="left:20px;top:116px;width:25px;padding:0"><div class="cb" style="left:6px;top:3px"></div></div>
<div class="td" style="left:45px;top:116px;width:25px;padding:0"><div class="cb" style="left:6px;top:3px"></div></div>
<div class="td" style="left:70px;top:116px;width:25px;padding:0"><div class="cb" style="left:6px;top:3px"></div></div>
<div class="td" style="left:95px;top:116px;width:20px;padding:0"><div class="cb" style="left:3px;top:3px"></div></div>
<div class="td" style="left:115px;top:116px;width:46px">Item</div>
<div class="td b" style="left:161px;top:116px;width:103px">Fujistu Think Pad</div>
<div class="td" style="left:264px;top:116px;width:80px;letter-spacing:.14px">SK015094</div>
<div class="td" style="left:344px;top:116px;width:40px">023</div>
<div class="td" style="left:384px;top:116px;width:50px"></div>
<div class="td r" style="left:434px;top:116px;width:35px">1</div>
<div class="td r" style="left:469px;top:116px;width:40px">20</div>
<div class="td" style="left:509px;top:116px;width:102px;letter-spacing:-.2px">THINK PADS</div>
<div class="td" style="left:611px;top:116px;width:100px;letter-spacing:-.2px">THINK PADS</div>
<div class="td" style="left:711px;top:116px;width:100px;letter-spacing:-.2px">THINK PAD</div>
<div class="td" style="left:811px;top:116px;width:86px;letter-spacing:-.4px">ITEM GROUP</div>
<div class="td" style="left:897px;top:116px;width:47px;padding:0"><div class="cb" style="left:17px;top:3px"><svg width="12" height="12" viewBox="0 0 12 12" style="position:absolute;left:-1px;top:-1px"><path d="M3 5 H5 V7.200 L9.200 3 H10 V5 L5 10 H3 Z" fill="#151515"/></svg></div></div>
<div class="td" style="left:944px;top:116px;width:47px;padding:0"><div class="cb" style="left:17px;top:3px"><svg width="12" height="12" viewBox="0 0 12 12" style="position:absolute;left:-1px;top:-1px"><path d="M3 5 H5 V7.200 L9.200 3 H10 V5 L5 10 H3 Z" fill="#151515"/></svg></div></div>
<div class="td" style="left:991px;top:116px;width:37px;padding:0"><div class="cb" style="left:12px;top:3px"><svg width="12" height="12" viewBox="0 0 12 12" style="position:absolute;left:-1px;top:-1px"><path d="M3 5 H5 V7.200 L9.200 3 H10 V5 L5 10 H3 Z" fill="#151515"/></svg></div></div>
<div class="td r" style="left:1028px;top:116px;width:85px">0</div>
<div class="td" style="left:1113px;top:116px;width:50px"></div>
<div class="td" style="left:1163px;top:116px;width:85px"></div>
<div class="td" style="left:1248px;top:116px;width:43px"></div>
<div class="td" style="left:1291px;top:116px;width:73px"></div>
<div class="a" style="left:0;top:166px;width:1339px;height:16px;background:#eee;border-top:1px solid #73889e;border-bottom:1px solid #73889e;box-shadow:inset 0 1px 0 #b8cfe5"></div>
<div class="a" style="left:0;top:182px;width:1324px;height:1px;background:#b8cfe5"></div>
<div class="a" style="left:0;top:166px;width:15px;height:16px;background:#eee;border-top:1px solid #73889e;border-bottom:1px solid #73889e;box-shadow:inset 1px 1px 0 #fff"></div>
<div class="a" style="left:5px;top:171px;width:0;height:0;border-top:4.500px solid transparent;border-bottom:4.500px solid transparent;border-right:5px solid #111"></div>
<div class="a" style="left:1323px;top:166px;width:16px;height:16px;background:#eee;border:1px solid #73889e;box-shadow:inset 1px 1px 0 #fff"></div>
<div class="a" style="left:1329px;top:171px;width:0;height:0;border-top:4.500px solid transparent;border-bottom:4.500px solid transparent;border-left:5px solid #111"></div>
<div class="a" style="left:15px;top:166px;width:941px;height:16px;border:1px solid #ffc000;background:linear-gradient(#f2c3a3 0%,#eeb691 35%,#e8a273 100%);box-shadow:inset 0 0 0 1px rgba(238,150,60,.55)"></div>
<div class="a" style="left:484px;top:170px;width:5px;height:9px;border-left:1px solid #8f86b8;border-right:1px solid #8f86b8"><div style="position:absolute;left:1px;top:0;width:1px;height:9px;background:#8f86b8"></div></div>
</div>
<div class="a" style="left:13px;top:439px;width:700px;height:24px;border:1px solid #c6c6c6;border-top-color:#a0a0a0;border-left-color:#a0a0a0;box-shadow:inset 1px 1px 0 #6e6e6e;background:#fff"></div>
</div></body></html>
